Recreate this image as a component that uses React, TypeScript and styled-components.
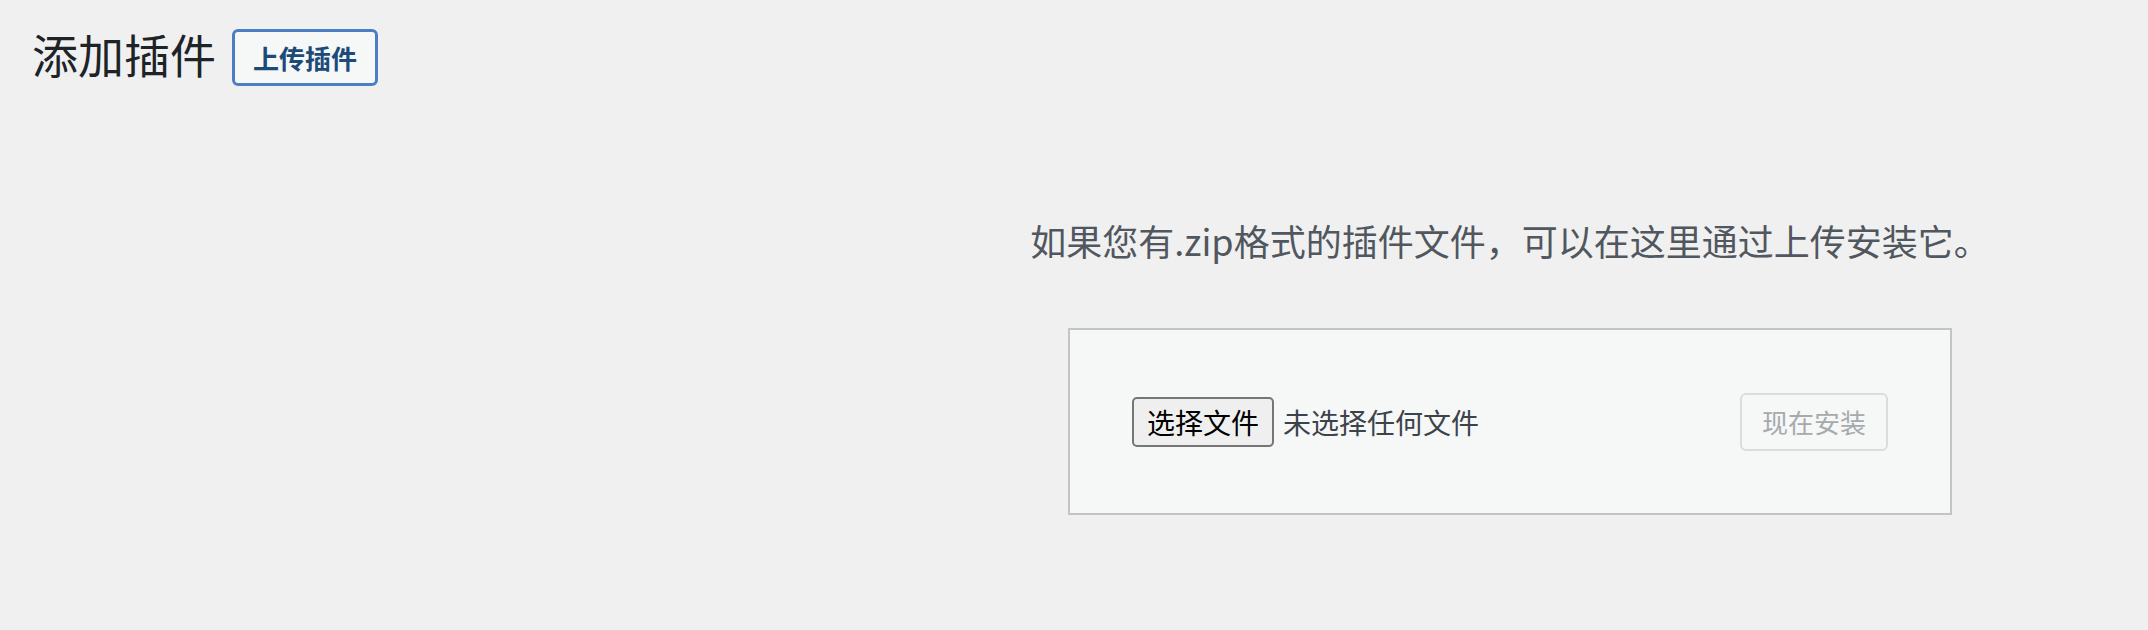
import styled, { createGlobalStyle } from 'styled-components';

const GlobalStyle = createGlobalStyle`
  html, body {
    margin: 0;
    padding: 0;
    background: #f0f0f1;
  }
  body {
    width: 2148px;
    height: 630px;
    overflow: hidden;
    font-family: "Noto Sans CJK SC", "Noto Sans", sans-serif;
    color: #3c434a;
  }
`;

const Wrap = styled.div`
  padding: 19px 0 0 32px;
`;

const Header = styled.div`
  display: flex;
  flex-direction: row;
  align-items: center;
  gap: 16px;
`;

const Title = styled.h1`
  margin: 0;
  font-size: 46px;
  font-weight: 400;
  line-height: 60px;
  color: #1d2327;
`;

const ActionButton = styled.a`
  display: inline-flex;
  align-items: center;
  box-sizing: border-box;
  height: 57px;
  padding: 0 18px;
  border: 3px solid #4a80c1;
  border-radius: 6px;
  background: #f6f7f7;
  color: #1c4a79;
  font-size: 26px;
  font-weight: 700;
  text-decoration: none;
  margin-top: 10px;
`;

const UploadArea = styled.section`
  display: flex;
  flex-direction: column;
  align-items: center;
  padding-left: 808px;
  box-sizing: border-box;
  width: 2148px;
`;

const Help = styled.p`
  margin: 129px 0 0;
  font-size: 36px;
  line-height: 50px;
  color: #50575e;
  text-align: center;
`;

const UploadForm = styled.form`
  display: flex;
  justify-content: space-between;
  align-items: center;
  box-sizing: border-box;
  width: 884px;
  height: 187px;
  margin-top: 63px;
  padding: 0 62px 0 62px;
  border: 2px solid #c3c4c7;
  background: #f6f7f7;
`;

const FilePicker = styled.label`
  display: flex;
  align-items: center;
  gap: 9px;
`;

const PickButton = styled.span`
  display: inline-flex;
  align-items: center;
  justify-content: center;
  box-sizing: border-box;
  height: 50px;
  padding: 0 13px;
  border: 2px solid #767676;
  border-radius: 5px;
  background: #efefef;
  color: #000;
  font-size: 28px;
`;

const FileName = styled.span`
  font-size: 28px;
  color: #3c434a;
`;

const InstallButton = styled.button`
  box-sizing: border-box;
  height: 58px;
  padding: 0 20px;
  border: 2px solid #dcdcde;
  border-radius: 6px;
  background: #f6f7f7;
  color: #a7aaad;
  font-family: inherit;
  font-size: 26px;
  line-height: 1;
  cursor: default;
`;

const App = () => {
  return (
    <>
      <GlobalStyle />
      <Wrap>
        <Header>
          <Title>添加插件</Title>
          <ActionButton href="#">上传插件</ActionButton>
        </Header>
        <UploadArea>
          <Help>如果您有.zip格式的插件文件，可以在这里通过上传安装它。</Help>
          <UploadForm onSubmit={(e) => e.preventDefault()}>
            <FilePicker>
              <PickButton>选择文件</PickButton>
              <FileName>未选择任何文件</FileName>
            </FilePicker>
            <InstallButton type="submit" disabled>
              现在安装
            </InstallButton>
          </UploadForm>
        </UploadArea>
      </Wrap>
    </>
  );
};

export default App;
